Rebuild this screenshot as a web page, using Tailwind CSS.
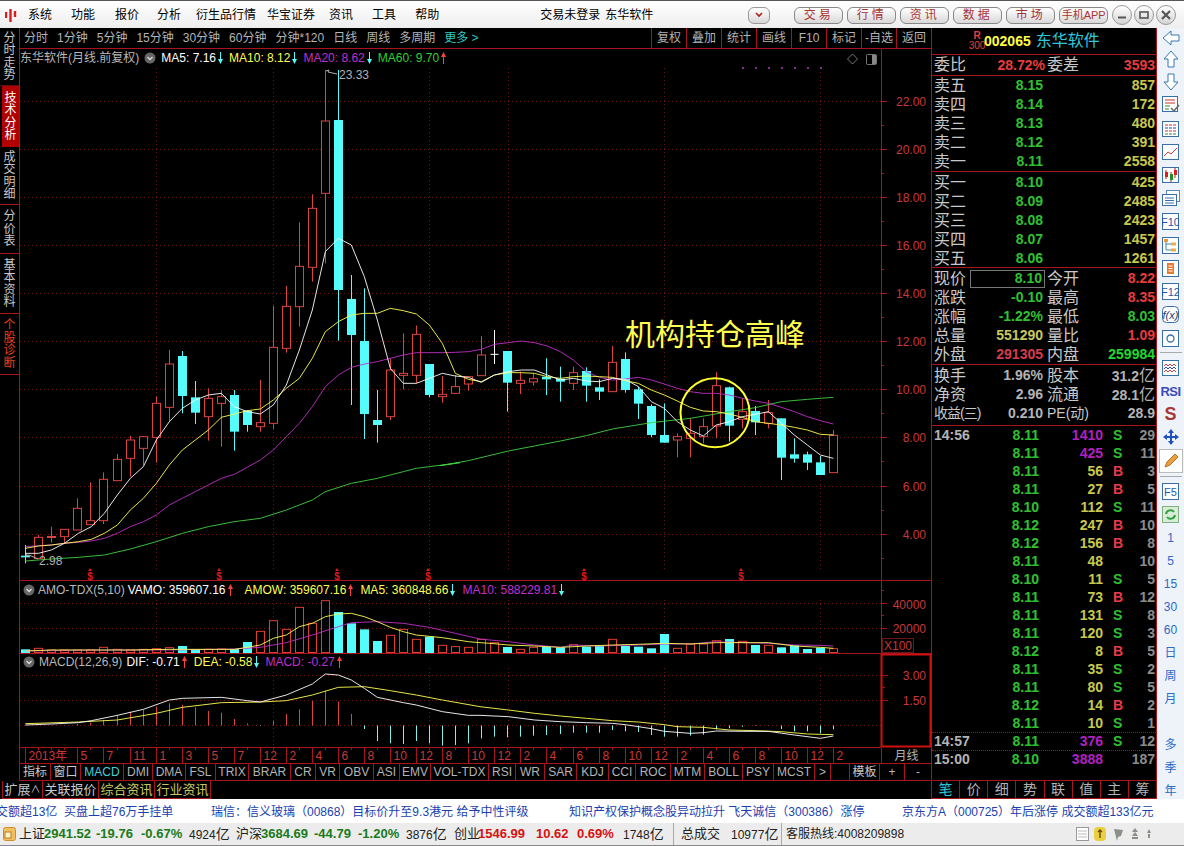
<!DOCTYPE html>
<html lang="zh-CN">

<head>
    <meta charset="UTF-8">
    <title>东华软件</title>
    <script src="https://cdn.jsdelivr.net/npm/@tailwindcss/browser@4"></script>
</head>

<body class="w-[1184px] h-[846px] overflow-hidden bg-black text-[12px] font-['Liberation_Sans','Noto_Sans_CJK_SC',sans-serif]">

    <!-- title bar -->
    <div class="flex items-center h-[28px] pt-[1px] border-t border-[#555] bg-gradient-to-b from-white to-[#eeeeee] text-black whitespace-nowrap">
        <svg class="ml-[5px] shrink-0" width="12" height="15" viewBox="0 0 12 15">
            <path d="M1 4v6M5.500 1v13M10 3v6" stroke="#d81e1e" stroke-width="2.400" />
        </svg>
        <span class="ml-[11px]">系统</span>
        <span class="ml-[19px]">功能</span>
        <span class="ml-[20px]">报价</span>
        <span class="ml-[18px]">分析</span>
        <span class="ml-[15px]">衍生品行情</span>
        <span class="ml-[11px]">华宝证券</span>
        <span class="ml-[14px]">资讯</span>
        <span class="ml-[19px]">工具</span>
        <span class="ml-[19px]">帮助</span>
        <span class="ml-[101px]">交易未登录</span>
        <span class="ml-[5px]">东华软件</span>
        <div class="ml-[95px] flex items-center justify-center w-[22px] h-[17px] rounded-[6px] border border-[#999] bg-gradient-to-b from-white to-[#d8d8d8]">
            <svg width="8" height="6" viewBox="0 0 8 6"><path d="M1 1l3 3 3-3" fill="none" stroke="#b02020" stroke-width="1.600" /></svg>
        </div>
        <div class="ml-[24px] flex gap-[4px]">
            <span class="flex items-center justify-center w-[49px] h-[17px] rounded-[6px] border border-[#888] bg-gradient-to-b from-white to-[#d8d8d8] text-[#a83434] tracking-[3px]">交易</span>
            <span class="flex items-center justify-center w-[49px] h-[17px] rounded-[6px] border border-[#888] bg-gradient-to-b from-white to-[#d8d8d8] text-[#a83434] tracking-[3px]">行情</span>
            <span class="flex items-center justify-center w-[49px] h-[17px] rounded-[6px] border border-[#888] bg-gradient-to-b from-white to-[#d8d8d8] text-[#a83434] tracking-[3px]">资讯</span>
            <span class="flex items-center justify-center w-[49px] h-[17px] rounded-[6px] border border-[#888] bg-gradient-to-b from-white to-[#d8d8d8] text-[#a83434] tracking-[3px]">数据</span>
            <span class="flex items-center justify-center w-[49px] h-[17px] rounded-[6px] border border-[#888] bg-gradient-to-b from-white to-[#d8d8d8] text-[#a83434] tracking-[3px]">市场</span>
            <span class="flex items-center justify-center w-[49px] h-[17px] rounded-[6px] border border-[#888] bg-gradient-to-b from-white to-[#d8d8d8] text-[#a83434] text-[11px]">手机APP</span>
        </div>
        <div class="ml-[4px] flex gap-[2px]">
            <span class="flex items-center justify-center w-[20px] h-[20px] rounded-full border border-[#999] bg-gradient-to-b from-white to-[#d4d4d4]">
                <svg width="10" height="10" viewBox="0 0 10 10"><path d="M1 7.500h8" stroke="#555" stroke-width="2" /></svg>
            </span>
            <span class="flex items-center justify-center w-[20px] h-[20px] rounded-full border border-[#999] bg-gradient-to-b from-white to-[#d4d4d4]">
                <svg width="10" height="10" viewBox="0 0 10 10"><rect x="1" y="2" width="8" height="6" fill="none" stroke="#555" stroke-width="1.600" /></svg>
            </span>
            <span class="flex items-center justify-center w-[20px] h-[20px] rounded-full border border-[#999] bg-gradient-to-b from-white to-[#d4d4d4]">
                <svg width="10" height="10" viewBox="0 0 10 10"><path d="M1 1l8 8M9 1l-8 8" stroke="#555" stroke-width="2.200" /></svg>
            </span>
        </div>
    </div>

    <div class="flex h-[771px]">
        <!-- left side: sidebar + charts + tabs -->
        <div class="flex flex-col w-[931px] shrink-0">
            <div class="flex h-[753px]">
                <div class="flex flex-col w-[20px] shrink-0 border-r border-[#a8141c] text-[#c8c8c8] text-[12px] leading-[12.5px]">
                    <div class="flex items-center justify-center h-[58px] border-b border-[#5a1010]"><span class="w-[12px] break-all">分时走势</span></div>
                    <div class="flex items-center justify-center h-[61px] ml-[2px] bg-[#b00000] text-white"><span class="w-[12px] break-all">技术分析</span></div>
                    <div class="flex items-center justify-center h-[58px] border-b border-[#a8141c]"><span class="w-[12px] break-all">成交明细</span></div>
                    <div class="flex items-center justify-center h-[49px] border-b border-[#a8141c]"><span class="w-[12px] break-all">分价表</span></div>
                    <div class="flex items-center justify-center h-[60px] border-b border-[#a8141c]"><span class="w-[12px] break-all">基本资料</span></div>
                    <div class="flex items-center justify-center h-[61px] border-b border-[#a8141c] text-[#e84020]"><span class="w-[12px] break-all">个股诊断</span></div>
                </div>
                <div class="flex flex-col w-[911px] shrink-0">
                    <!-- period bar -->
                    <div class="flex items-center h-[21px] border-b border-[#a8141c] text-[#b4b4b4] whitespace-nowrap">
                        <div class="flex items-center gap-[9px] ml-[4px] w-[627px]">
                            <span>分时</span><span>1分钟</span><span>5分钟</span><span>15分钟</span><span>30分钟</span><span>60分钟</span><span>分钟*120</span><span>日线</span><span>周线</span><span>多周期</span><span class="text-[#30c8c0]">更多 &gt;</span>
                        </div>
                        <div class="flex h-full">
                            <span class="flex items-center justify-center w-[35px] border-l border-[#a8141c]">复权</span>
                            <span class="flex items-center justify-center w-[35px] border-l border-[#a8141c]">叠加</span>
                            <span class="flex items-center justify-center w-[35px] border-l border-[#a8141c]">统计</span>
                            <span class="flex items-center justify-center w-[35px] border-l border-[#a8141c]">画线</span>
                            <span class="flex items-center justify-center w-[35px] border-l border-[#a8141c]">F10</span>
                            <span class="flex items-center justify-center w-[35px] border-l border-[#a8141c]">标记</span>
                            <span class="flex items-center justify-center w-[35px] border-l border-[#a8141c]">-自选</span>
                            <span class="flex items-center justify-center w-[35px] border-l border-[#a8141c]">返回</span>
                        </div>
                    </div>
                    <!-- price chart -->
                    <div class="relative h-[532px]">
                        <svg id="price" class="block" width="911" height="532" viewBox="20 49 911 532"></svg>
                        <div id="price-legend" class="absolute top-0 left-0 flex items-center h-[18px] gap-[5px] whitespace-nowrap text-[#b8b8b8]"></div>
                    </div>
                    <!-- amount -->
                    <div class="relative h-[73px]">
                        <svg id="amo" class="block" width="911" height="73" viewBox="20 581 911 73"></svg>
                        <div id="amo-legend" class="absolute top-0 left-[3px] flex items-center h-[17px] whitespace-nowrap text-[#b8b8b8]"></div>
                    </div>
                    <!-- macd -->
                    <div class="relative h-[94px]">
                        <svg id="macd" class="block" width="911" height="94" viewBox="20 654 911 94"></svg>
                        <div id="macd-legend" class="absolute top-0 left-[3px] flex items-center h-[16px] whitespace-nowrap text-[#b8b8b8]"></div>
                    </div>
                    <!-- dates -->
                    <div class="flex h-[16px] border-b border-[#a8141c]">
                        <svg id="dates" class="block shrink-0" width="861" height="15" viewBox="20 748 861 15"></svg>
                        <span class="flex flex-1 items-center justify-center border-l border-[#a8141c] text-[#b4b4b4]">月线</span>
                    </div>
                    <!-- indicators -->
                    <div class="flex h-[17px] border-b border-[#a8141c] text-[#b4b4b4] whitespace-nowrap">
                        <span class="flex items-center justify-center w-[31px] border-r border-[#a8141c] text-[#c8c8c8]">指标</span>
                        <span class="flex items-center justify-center w-[30px] border-r border-[#a8141c] text-[#c8c8c8]">窗口</span>
                        <span class="flex items-center justify-center w-[43px] border-r border-[#a8141c] text-[#40d0d8]">MACD</span>
                        <span class="flex items-center justify-center w-[29px] border-r border-[#a8141c]">DMI</span>
                        <span class="flex items-center justify-center w-[33px] border-r border-[#a8141c]">DMA</span>
                        <span class="flex items-center justify-center w-[30px] border-r border-[#a8141c]">FSL</span>
                        <span class="flex items-center justify-center w-[33px] border-r border-[#a8141c]">TRIX</span>
                        <span class="flex items-center justify-center w-[42px] border-r border-[#a8141c]">BRAR</span>
                        <span class="flex items-center justify-center w-[25px] border-r border-[#a8141c]">CR</span>
                        <span class="flex items-center justify-center w-[24px] border-r border-[#a8141c]">VR</span>
                        <span class="flex items-center justify-center w-[34px] border-r border-[#a8141c]">OBV</span>
                        <span class="flex items-center justify-center w-[26px] border-r border-[#a8141c]">ASI</span>
                        <span class="flex items-center justify-center w-[31px] border-r border-[#a8141c]">EMV</span>
                        <span class="flex items-center justify-center w-[58px] border-r border-[#a8141c]">VOL-TDX</span>
                        <span class="flex items-center justify-center w-[27px] border-r border-[#a8141c]">RSI</span>
                        <span class="flex items-center justify-center w-[29px] border-r border-[#a8141c]">WR</span>
                        <span class="flex items-center justify-center w-[32px] border-r border-[#a8141c]">SAR</span>
                        <span class="flex items-center justify-center w-[32px] border-r border-[#a8141c]">KDJ</span>
                        <span class="flex items-center justify-center w-[27px] border-r border-[#a8141c]">CCI</span>
                        <span class="flex items-center justify-center w-[35px] border-r border-[#a8141c]">ROC</span>
                        <span class="flex items-center justify-center w-[34px] border-r border-[#a8141c]">MTM</span>
                        <span class="flex items-center justify-center w-[38px] border-r border-[#a8141c]">BOLL</span>
                        <span class="flex items-center justify-center w-[31px] border-r border-[#a8141c]">PSY</span>
                        <span class="flex items-center justify-center w-[41px] border-r border-[#a8141c]">MCST</span>
                        <span class="flex items-center justify-center w-[16px] border-r border-[#a8141c]">&gt;</span>
                        <span class="w-[19px] border-r border-[#a8141c]"></span>
                        <span class="flex items-center justify-center w-[30px] border-r border-[#a8141c] text-[#c8c8c8]">模板</span>
                        <span class="flex items-center justify-center w-[25px] border-r border-[#a8141c]">+</span>
                        <span class="flex flex-1 items-center justify-center">-</span>
                    </div>
                </div>
            </div>
            <!-- extension tabs -->
            <div class="flex h-[18px] ml-[2px] whitespace-nowrap">
                <span class="flex items-center justify-center w-[41px] border border-t-0 border-[#a8141c] text-[#c8c8c8] text-[13px]">扩展<small class="text-[10px]">∧</small></span>
                <span class="flex items-center justify-center w-[56px] border-r border-b border-[#a8141c] text-[#c8c8c8] text-[13px]">关联报价</span>
                <span class="flex items-center justify-center w-[56px] border-r border-b border-[#a8141c] text-[#c8c860] text-[13px]">综合资讯</span>
                <span class="flex items-center justify-center w-[56px] border-r border-b border-[#a8141c] text-[#c8c860] text-[13px]">行业资讯</span>
            </div>
        </div>

        <!-- quote panel -->
        <div class="flex flex-col w-[226px] shrink-0 border-x border-[#a8141c] text-[#c8c8c8] whitespace-nowrap">
            <div class="flex items-center h-[27px] border-b border-[#a8141c]">
                <span class="flex flex-col items-center ml-[39px] w-[12px] text-[10px] leading-[10px] text-[#e04040]"><b>R</b><span>300</span></span>
                <b class="ml-[1px] text-[14px] text-[#ffff40]">002065</b>
                <span class="ml-[5px] text-[16px] text-[#30c8d8]">东华软件</span>
            </div>
            <div class="flex items-center h-[21px] border-b border-[#a8141c] pl-[2px]">
                <span class="w-[36px] text-[16px]">委比</span><b class="w-[75px] text-right text-[14px] text-[#e83c3c]">28.72%</b>
                <span class="ml-[2px] w-[32px] text-[16px]">委差</span><b class="flex-1 pr-[1px] text-right text-[14px] text-[#e83c3c]">3593</b>
            </div>
            <div id="asks" class="h-[96px] border-b border-[#a8141c] pl-[2px]"></div>
            <div id="bids" class="h-[96px] pt-[1px] border-b border-[#a8141c] pl-[2px]"></div>
            <div class="h-[97px] pt-[1px] border-b border-[#a8141c] pl-[2px]">
                <div class="flex items-center h-[19px]"><span class="w-[36px] text-[16px]">现价</span><b class="flex justify-end items-center w-[75px] h-[18px] pr-[2px] border border-[#777] text-[14px] text-[#30c030]">8.10</b><span class="ml-[2px] w-[32px] text-[16px]">今开</span><b class="flex-1 pr-[1px] text-right text-[14px] text-[#e83c3c]">8.22</b></div>
                <div class="flex items-center h-[19px]"><span class="w-[36px] text-[16px]">涨跌</span><b class="w-[73px] text-right text-[14px] text-[#30c030]">-0.10</b><span class="ml-[4px] w-[32px] text-[16px]">最高</span><b class="flex-1 pr-[1px] text-right text-[14px] text-[#e83c3c]">8.35</b></div>
                <div class="flex items-center h-[19px]"><span class="w-[36px] text-[16px]">涨幅</span><b class="w-[73px] text-right text-[14px] text-[#30c030]">-1.22%</b><span class="ml-[4px] w-[32px] text-[16px]">最低</span><b class="flex-1 pr-[1px] text-right text-[14px] text-[#30c030]">8.03</b></div>
                <div class="flex items-center h-[19px]"><span class="w-[36px] text-[16px]">总量</span><b class="w-[73px] text-right text-[14px] text-[#c8c860]">551290</b><span class="ml-[4px] w-[32px] text-[16px]">量比</span><b class="flex-1 pr-[1px] text-right text-[14px] text-[#e83c3c]">1.09</b></div>
                <div class="flex items-center h-[19px]"><span class="w-[36px] text-[16px]">外盘</span><b class="w-[73px] text-right text-[14px] text-[#d83c4c]">291305</b><span class="ml-[4px] w-[32px] text-[16px]">内盘</span><b class="flex-1 pr-[1px] text-right text-[14px] text-[#20d830]">259984</b></div>
            </div>
            <div class="h-[61px] pt-[1px] border-b border-[#a8141c] pl-[2px]">
                <div class="flex items-center h-[19px]"><span class="w-[36px] text-[16px]">换手</span><b class="w-[73px] text-right text-[14px] text-[#b4b4b4]">1.96%</b><span class="ml-[4px] w-[32px] text-[16px]">股本</span><b class="flex-1 pr-[1px] text-right text-[14px] text-[#b4b4b4]">31.2<span class="font-normal text-[16px]">亿</span></b></div>
                <div class="flex items-center h-[19px]"><span class="w-[36px] text-[16px]">净资</span><b class="w-[73px] text-right text-[14px] text-[#b4b4b4]">2.96</b><span class="ml-[4px] w-[32px] text-[16px]">流通</span><b class="flex-1 pr-[1px] text-right text-[14px] text-[#b4b4b4]">28.1<span class="font-normal text-[16px]">亿</span></b></div>
                <div class="flex items-center h-[19px]"><span class="w-[36px] text-[14px] tracking-[-1px]">收益(三)</span><b class="w-[73px] text-right text-[14px] text-[#b4b4b4]">0.210</b><span class="ml-[4px] w-[42px] text-[14px]">PE(动)</span><b class="flex-1 pr-[1px] text-right text-[14px] text-[#b4b4b4]">28.9</b></div>
            </div>
            <div id="trades" class="flex-1"></div>
            <div class="flex h-[19px] border-y border-[#a8141c] text-[14px] text-[#b4b4b4]">
                <span class="flex flex-1 items-center justify-center border-r border-[#a8141c] text-[#30c8d8]">笔</span>
                <span class="flex flex-1 items-center justify-center border-r border-[#a8141c]">价</span>
                <span class="flex flex-1 items-center justify-center border-r border-[#a8141c]">细</span>
                <span class="flex flex-1 items-center justify-center border-r border-[#a8141c]">势</span>
                <span class="flex flex-1 items-center justify-center border-r border-[#a8141c]">联</span>
                <span class="flex flex-1 items-center justify-center border-r border-[#a8141c]">值</span>
                <span class="flex flex-1 items-center justify-center border-r border-[#a8141c]">主</span>
                <span class="flex flex-1 items-center justify-center">筹</span>
            </div>
        </div>

        <!-- tool strip -->
        <div class="flex flex-col items-center w-[27px] shrink-0 overflow-hidden bg-[#eef3fa] text-[#2a6ac8]">
            <span class="flex items-center justify-center h-[19px] shrink-0"><svg width="20" height="18" viewBox="0 0 20 18"><path d="M2 9l8-7v4h8v6h-8v4z" fill="#fff" stroke="#3a78b0" /></svg></span>
            <span class="flex items-center justify-center h-[23.3px] shrink-0"><svg width="18" height="20" viewBox="0 0 18 20"><path d="M9 2l7 8h-4v8H6v-8H2z" fill="#fff" stroke="#3a78b0" /></svg></span>
            <span class="flex items-center justify-center h-[23.3px] shrink-0"><svg width="18" height="20" viewBox="0 0 18 20"><path d="M9 18l7-8h-4V2H6v8H2z" fill="#fff" stroke="#3a78b0" /></svg></span>
            <span class="flex items-center justify-center h-[23.3px] shrink-0"><svg width="18" height="18" viewBox="0 0 18 18"><rect x=".5" y=".5" width="15" height="15" fill="#fff" stroke="#3a6ea8" /><path d="M3 4h10M3 7h10" stroke="#c83030" /><path d="M3 10h5M3 13h4" stroke="#308830" /><path d="M9 12l3 3 5-6" fill="none" stroke="#666" stroke-width="1.500" /></svg></span>
            <span class="flex items-center justify-center h-[23.3px] shrink-0"><svg width="17" height="16" viewBox="0 0 17 16"><rect x=".5" y=".5" width="16" height="15" fill="#fff" stroke="#3a6ea8" /><path d="M3 4h11M3 10h11" stroke="#c83030" stroke-dasharray="3 1" /><path d="M3 7h11" stroke="#2040c0" stroke-dasharray="3 1" /><path d="M3 13h11" stroke="#308830" stroke-dasharray="3 1" /></svg></span>
            <span class="flex items-center justify-center h-[23.3px] shrink-0"><svg width="17" height="16" viewBox="0 0 17 16"><rect x=".5" y=".5" width="16" height="15" fill="#fff" stroke="#3a6ea8" /><path d="M2 12l4-4 3 2 6-6" fill="none" stroke="#d04040" /></svg></span>
            <span class="flex items-center justify-center h-[23.3px] shrink-0"><svg width="17" height="16" viewBox="0 0 17 16"><rect x=".5" y=".5" width="16" height="15" fill="#fff" stroke="#3a6ea8" /><path d="M4 3v9M9 5v10M13 1v10" stroke="#b02020" /><rect x="3" y="5" width="3" height="5" fill="#d82020" /><rect x="8" y="7" width="3" height="6" fill="#209020" /><rect x="12" y="3" width="3" height="5" fill="#d82020" /></svg></span>
            <span class="flex items-center justify-center h-[23.3px] shrink-0"><svg width="18" height="16" viewBox="0 0 18 16"><rect x="4.500" y=".5" width="13" height="11" fill="#fff" stroke="#5a88b8" /><rect x=".5" y="4.500" width="14" height="11" fill="#fff" stroke="#3a6ea8" /><path d="M3 8h9M3 10.500h9M3 13h9" stroke="#3a6ea8" /></svg></span>
            <span class="flex items-center justify-center h-[23.3px] shrink-0"><svg width="17" height="17" viewBox="0 0 17 17"><rect x=".5" y=".5" width="16" height="16" fill="#fff" stroke="#3a6ea8" /><text x="8.500" y="13" text-anchor="middle" font-size="11" fill="#1f5aa8">F10</text></svg></span>
            <span class="flex items-center justify-center h-[23.3px] shrink-0"><svg width="17" height="17" viewBox="0 0 17 17"><rect x=".5" y=".5" width="16" height="16" fill="#fff" stroke="#3a6ea8" /><path d="M4 3v10h5M4 7h5" fill="none" stroke="#3a88a8" /><rect x="2" y="2" width="4" height="3" fill="#e89830" /><rect x="9" y="5.500" width="5" height="3" fill="#e8b040" /><rect x="9" y="11.500" width="5" height="3" fill="#e8b040" /></svg></span>
            <span class="flex items-center justify-center h-[23.3px] shrink-0"><svg width="17" height="17" viewBox="0 0 17 17"><rect x=".5" y=".5" width="16" height="16" fill="#fff" stroke="#3a6ea8" /><rect x="5" y="3" width="7" height="11" fill="#e87830" /><path d="M6.500 6h4M6.500 8.500h4M6.500 11h4" stroke="#fff" /></svg></span>
            <span class="flex items-center justify-center h-[23.3px] shrink-0"><svg width="17" height="17" viewBox="0 0 17 17"><rect x=".5" y=".5" width="16" height="16" fill="#fff" stroke="#3a6ea8" /><text x="8.500" y="13" text-anchor="middle" font-size="11" fill="#1f5aa8">F12</text></svg></span>
            <span class="flex items-center justify-center h-[23.3px] shrink-0"><svg width="17" height="17" viewBox="0 0 17 17"><rect x=".5" y=".5" width="16" height="16" rx="4" fill="#fff" stroke="#3a6ea8" /><text x="8.500" y="13" text-anchor="middle" font-size="11" font-style="italic" fill="#1f3a68">f(x)</text></svg></span>
            <span class="flex items-center justify-center h-[23.3px] shrink-0"><svg width="17" height="17" viewBox="0 0 17 17"><rect x=".5" y=".5" width="16" height="16" fill="#fff" stroke="#3a6ea8" /><circle cx="8.500" cy="8.500" r="3.500" fill="none" stroke="#3a6ea8" stroke-width="1.300" /></svg></span>
            <span class="flex items-center justify-center h-[6px] w-full shrink-0"><span class="w-[22px] border-t border-[#aaa]"></span></span>
            <span class="flex items-center justify-center h-[24px] shrink-0"><svg width="17" height="16" viewBox="0 0 17 16"><rect x=".5" y=".5" width="16" height="15" fill="#fff" stroke="#3a6ea8" /><path d="M2 6l2-2 2 2 2-2 2 2 2-2 2 2" fill="none" stroke="#d04040" /><path d="M2 9l2-2 2 2 2-2 2 2 2-2 2 2" fill="none" stroke="#3040c0" /><path d="M2 12l2-2 2 2 2-2 2 2 2-2 2 2" fill="none" stroke="#d04040" /></svg></span>
            <b class="flex items-center justify-center h-[23px] shrink-0 text-[13px] text-[#3a4ab8] tracking-[-0.5px]">RSI</b>
            <b class="flex items-center justify-center h-[23px] shrink-0 text-[18px] text-[#a83838]">S</b>
            <span class="flex items-center justify-center h-[23px] shrink-0"><svg width="18" height="18" viewBox="0 0 18 18"><path d="M9 1l3 4h-2v3h3V6l4 3-4 3v-2h-3v3h2l-3 4-3-4h2v-3H5v2L1 9l4-3v2h3V5H6z" fill="#1f50c0" /></svg></span>
            <span class="flex items-center justify-center w-[24px] h-[24px] shrink-0 border border-[#bbb] bg-white"><svg width="18" height="18" viewBox="0 0 18 18"><path d="M3 15l2-5 8-8 3 3-8 8z" fill="#e8a040" stroke="#b87020" /></svg></span>
            <span class="flex items-center justify-center h-[7px] w-full shrink-0"><span class="w-[22px] border-t border-[#aaa]"></span></span>
            <span class="flex items-center justify-center h-[23px] shrink-0"><svg width="17" height="17" viewBox="0 0 17 17"><rect x=".5" y=".5" width="16" height="16" fill="#fff" stroke="#3a6ea8" /><text x="8.500" y="13" text-anchor="middle" font-size="11" fill="#1f5aa8">F5</text></svg></span>
            <span class="flex items-center justify-center h-[23px] mb-[1px] shrink-0"><svg width="17" height="17" viewBox="0 0 17 17"><rect x=".5" y=".5" width="16" height="16" fill="#d8ecd8" stroke="#80b080" /><path d="M4 8a4.500 4.500 0 0 1 8-2M13 9a4.500 4.500 0 0 1-8 2" fill="none" stroke="#30a040" stroke-width="2" /></svg></span>
            <span class="flex items-center justify-center h-[23px] shrink-0">1</span>
            <span class="flex items-center justify-center h-[23px] shrink-0">5</span>
            <span class="flex items-center justify-center h-[23px] shrink-0">15</span>
            <span class="flex items-center justify-center h-[23px] shrink-0">30</span>
            <span class="flex items-center justify-center h-[23px] shrink-0">60</span>
            <span class="flex items-center justify-center h-[23px] shrink-0">日</span>
            <span class="flex items-center justify-center h-[23px] shrink-0">周</span>
            <span class="flex items-center justify-center h-[23px] shrink-0">月</span>
            <span class="h-[23px] shrink-0"></span>
            <span class="flex items-center justify-center h-[23px] shrink-0">多</span>
            <span class="flex items-center justify-center h-[23px] shrink-0">季</span>
            <span class="flex items-center justify-center h-[23px] shrink-0">年</span>
        </div>
    </div>

    <!-- news ticker -->
    <div class="flex items-center h-[24px] pt-[1px] bg-white text-[#1a3fb0] whitespace-nowrap overflow-hidden">
        <span class="-ml-[4px] w-[215px] shrink-0">交额超13亿&nbsp;&nbsp;买盘上超76万手挂单</span>
        <span class="w-[358px] shrink-0">瑞信：信义玻璃（00868）目标价升至9.3港元 给予中性评级</span>
        <span class="w-[333px] shrink-0">知识产权保护概念股异动拉升 飞天诚信（300386）涨停</span>
        <span class="shrink-0">京东方A（000725）年后涨停 成交额超133亿元</span>
    </div>

    <!-- status bar -->
    <div class="flex items-center h-[23px] bg-[#ececec] border-b border-[#888] whitespace-nowrap text-[#222]">
        <span class="ml-[3px] w-[16px] shrink-0"><svg width="13" height="14" viewBox="0 0 13 14"><rect x=".5" y=".5" width="12" height="13" rx="2" fill="#f0c060" stroke="#c89030" /><rect x="2" y="5" width="6" height="6" fill="#fff4d0" stroke="#c07820" /></svg></span>
        <span class="w-[25px] text-[13px]">上证</span>
        <b class="w-[52px] text-[13px] text-[#1a7a1a]">2941.52</b>
        <b class="w-[45px] text-[13px] text-[#1a7a1a]">-19.76</b>
        <b class="w-[48px] text-[13px] text-[#1a7a1a]">-0.67%</b>
        <span class="w-[47px]">4924<span class="text-[14px]">亿</span></span>
        <span class="w-[25px] text-[13px]">沪深</span>
        <b class="w-[53px] text-[13px] text-[#1a7a1a]">3684.69</b>
        <b class="w-[44px] text-[13px] text-[#1a7a1a]">-44.79</b>
        <b class="w-[48px] text-[13px] text-[#1a7a1a]">-1.20%</b>
        <span class="w-[48px]">3876<span class="text-[14px]">亿</span></span>
        <span class="w-[24px] text-[13px]">创业</span>
        <b class="w-[58px] text-[13px] text-[#d81010]">1546.99</b>
        <b class="w-[41px] text-[13px] text-[#d81010]">10.62</b>
        <b class="w-[46px] text-[13px] text-[#d81010]">0.69%</b>
        <span class="w-[50px]">1748<span class="text-[14px]">亿</span></span>
        <span class="h-full w-[8px] border-l border-[#aaa]"></span>
        <span class="w-[50px] text-[13px]">总成交</span>
        <span class="w-[50px]">10977<span class="text-[14px]">亿</span></span>
        <span class="h-full w-[5px] border-l border-[#aaa]"></span>
        <span class="w-[290px]">客服热线:4008209898</span>
        <span class="w-[18px]"><svg width="13" height="14" viewBox="0 0 13 14"><rect x=".5" y=".5" width="12" height="13" fill="#fff" stroke="#999" /><path d="M2 4h9M2 7h9M2 10h9" stroke="#bbb" /></svg></span>
        <span class="w-[19px]"><svg width="12" height="14" viewBox="0 0 12 14"><rect width="12" height="14" rx="4" fill="#e8d040" /><path d="M6 3v8M4 5l2-2 2 2" fill="none" stroke="#705010" stroke-width="1.500" /></svg></span>
        <span class="w-[18px]"><svg width="11" height="13" viewBox="0 0 11 13"><path d="M1 1l9 1-2 6-3 1-1 4-1-4z" fill="#8a9088" /></svg></span>
        <span class="w-[16px]"><svg width="8" height="12" viewBox="0 0 8 12"><path d="M4 0l3 4H1zM4 4l3 4H1zM1 9h6v2H1z" fill="#8a9088" /></svg></span>
        <span><svg width="4" height="10" viewBox="0 0 4 10"><path d="M2 0l2 4H0zM1 5h2v4H1z" fill="#8a9088" /></svg></span>
    </div>

    <script>
        const RED = '#dc4440', CYAN = '#54fcfc', LINE = '#a8141c', DOT = '#6e1414', AXIS = '#c83838';
        const cx = i => Math.round(25.3 + 13.03 * i) + 0.5;

        // [kind, high, top, bottom, low], zoomed pixel rows, first part /3+60, second part /3+320
        const first = [['c', 1455, 1487, 1492, 1510], ['r', 1425, 1432, 1495, 1495], ['f', 1400, 1428, 1434, 1448], ['r', 1408, 1408, 1430, 1450], ['r', 1315, 1345, 1410, 1410], ['r', 1267, 1382, 1394, 1394], ['r', 1237, 1258, 1382, 1392], ['r', 1182, 1198, 1262, 1262], ['r', 1128, 1140, 1195, 1250], ['r', 1128, 1130, 1165, 1215], ['r', 1010, 1030, 1132, 1208], ['r', 870, 912, 1042, 1085], ['c', 873, 888, 1008, 1060], ['c', 963, 1012, 1058, 1092], ['r', 985, 1015, 1070, 1142], ['r', 990, 1010, 1030, 1160], ['c', 990, 1005, 1115, 1172], ['c', 1050, 1052, 1095, 1115], ['r', 960, 1088, 1100, 1115], ['r', 737, 862, 1090, 1108], ['r', 678, 739, 865, 878], ['r', 487, 619, 740, 800], ['r', 403, 445, 622, 665], ['r', 30, 183, 400, 610], ['c', 30, 180, 690, 842], ['c', 645, 717, 825, 1035], ['c', 685, 843, 1062, 1137], ['c', 990, 1080, 1095, 1148], ['r', 895, 930, 1070, 1080], ['r', 820, 940, 946, 988], ['r', 797, 823, 946, 970], ['c', 912, 912, 1005, 1012], ['r', 948, 1003, 1010, 1028], ['r', 945, 980, 1000, 1000]];
        const second = [['r', 168, 170, 192, 212], ['r', 48, 105, 167, 167], ['w', 30, 103, 104, 132], ['c', 93, 93, 188, 275], ['r', 155, 181, 190, 222], ['r', 160, 176, 186, 197], ['c', 115, 170, 178, 225], ['c', 140, 176, 185, 245], ['r', 140, 158, 190, 210], ['c', 142, 153, 197, 245], ['c', 178, 202, 215, 240], ['r', 78, 127, 215, 215], ['c', 97, 117, 210, 218], ['c', 200, 208, 251, 297], ['c', 253, 258, 345, 352], ['c', 250, 345, 368, 368], ['r', 340, 350, 360, 412], ['r', 295, 340, 355, 412], ['r', 295, 320, 350, 370], ['r', 157, 197, 318, 355], ['c', 200, 202, 317, 365], ['r', 235, 275, 298, 325], ['c', 258, 273, 307, 345], ['r', 240, 278, 310, 325], ['c', 295, 295, 413, 480], ['c', 355, 403, 416, 428], ['c', 395, 403, 428, 450], ['c', 408, 427, 465, 465], ['r', 330, 346, 458, 458]];
        const candles = first.map(c => [c[0], ...c.slice(1).map(v => 60 + v / 3)]).concat(second.map(c => [c[0], ...c.slice(1).map(v => 320 + v / 3)]));

        const p6 = a => a.map(([x, y]) => (20 + x / 3) + ',' + (60 + y / 3));
        const p7 = a => a.map(([x, y]) => (440 + x / 3) + ',' + (320 + y / 3));
        const p8 = a => a.map(([x, y]) => (20 + x / 3) + ',' + (570 + y / 3));
        const p9 = a => a.map(([x, y]) => (470 + x / 3) + ',' + (570 + y / 3));
        const poly = (pts, color) => `<polyline points="${pts.join(' ')}" fill="none" stroke="${color}" stroke-width="0.9"/>`;

        const ma5 = p6([[16, 1480], [55, 1480], [94, 1470], [133, 1450], [175, 1420], [214, 1400], [253, 1360], [292, 1305], [331, 1255], [370, 1220], [409, 1140], [448, 1085], [487, 1045], [526, 1020], [565, 1005], [604, 1000], [643, 1040], [682, 1055], [721, 1062], [760, 1035], [799, 975], [838, 870], [877, 750], [916, 575], [955, 535], [994, 555], [1033, 650], [1072, 780], [1111, 925], [1150, 970], [1189, 970], [1228, 955], [1267, 940], [1306, 948]]).concat(p7([[85, 172], [124, 187], [163, 165], [205, 155], [244, 150], [283, 150], [322, 165], [361, 180], [400, 175], [439, 183], [478, 185], [517, 175], [556, 178], [595, 200], [634, 245], [673, 265], [712, 305], [751, 330], [790, 348], [829, 315], [868, 305], [907, 290], [946, 283], [985, 275], [1024, 310], [1063, 345], [1102, 375], [1141, 405], [1180, 415]]));
        const ma10 = p6([[16, 1465], [55, 1458], [94, 1455], [133, 1450], [175, 1445], [214, 1438], [253, 1420], [292, 1395], [331, 1350], [370, 1315], [409, 1270], [448, 1215], [487, 1170], [526, 1140], [565, 1110], [604, 1072], [643, 1062], [682, 1052], [721, 1047], [760, 1020], [799, 985], [838, 955], [877, 895], [916, 815], [955, 785], [994, 765], [1033, 760], [1072, 760], [1111, 745], [1150, 752], [1189, 762], [1228, 795], [1267, 850], [1306, 940]]).concat(p7([[85, 178], [124, 185], [163, 165], [205, 158], [244, 158], [283, 160], [322, 170], [361, 175], [400, 170], [439, 168], [478, 170], [517, 172], [556, 182], [595, 190], [634, 210], [673, 225], [712, 243], [751, 262], [790, 273], [829, 275], [868, 282], [907, 292], [946, 305], [985, 310], [1024, 315], [1063, 322], [1102, 330], [1141, 343], [1180, 345]]));
        const ma20 = p6([[16, 1460], [55, 1457], [94, 1455], [133, 1450], [175, 1447], [214, 1443], [253, 1435], [292, 1420], [331, 1400], [370, 1385], [409, 1365], [448, 1335], [487, 1315], [526, 1295], [565, 1275], [604, 1255], [643, 1243], [682, 1222], [721, 1200], [760, 1170], [799, 1130], [838, 1090], [877, 1040], [916, 980], [955, 945], [994, 922], [1033, 912], [1072, 905], [1111, 895], [1150, 885], [1189, 878], [1228, 878], [1267, 878], [1306, 877]]).concat(p7([[85, 95], [124, 88], [163, 73], [205, 68], [244, 63], [283, 68], [322, 78], [361, 95], [400, 120], [439, 155], [478, 172], [517, 180], [556, 177], [595, 172], [634, 180], [673, 192], [712, 205], [751, 215], [790, 220], [829, 220], [868, 225], [907, 235], [946, 243], [985, 250], [1024, 262], [1063, 275], [1102, 290], [1141, 302], [1180, 312]]));
        const ma60 = p6([[16, 1503], [94, 1497], [175, 1492], [253, 1485], [331, 1467], [409, 1445], [487, 1420], [565, 1400], [643, 1385], [721, 1375], [799, 1350], [877, 1320], [916, 1295], [994, 1270], [1072, 1255], [1150, 1235], [1189, 1225], [1267, 1215], [1320, 1208]]).concat(p7([[0, 437], [85, 422], [205, 393], [283, 378], [361, 363], [439, 347], [517, 327], [634, 308], [751, 295], [868, 275], [946, 263], [1024, 245], [1102, 238], [1180, 232]]));

        const hdot = (y, x2 = 881) => `<path d="M20 ${y}.5H${x2}" stroke="${DOT}" stroke-dasharray="1 3"/>`;
        const vdot = (x, y1, y2) => `<path d="M${x}.5 ${y1}V${y2}" stroke="${DOT}" stroke-dasharray="1 3"/>`;
        const label = (x, y, t, anchor = 'end', color = AXIS) => `<text x="${x}" y="${y}" fill="${color}" font-size="12" text-anchor="${anchor}">${t}</text>`;
        const grid = [156, 273, 429, 508, 664, 820];

        // price chart
        let s = '';
        const levels = [[101, '22.00'], [149, '20.00'], [197, '18.00'], [245, '16.00'], [293, '14.00'], [341, '12.00'], [389, '10.00'], [437, '8.00'], [486, '6.00'], [534, '4.00']];
        levels.forEach(([y, t]) => {
            s += hdot(y) + `<path d="M881 ${y}.5h6M881 ${y + 24}.5h3" stroke="${LINE}"/>` + label(926, y + 5, t);
        });
        grid.forEach(x => s += vdot(x, 68, 570));
        s += `<path d="M881.500 49V580M20 580.500H931" stroke="${LINE}"/>`;
        candles.forEach((c, i) => {
            const x = cx(i), color = c[0] == 'c' ? CYAN : c[0] == 'w' ? '#fff' : RED;
            s += `<path d="M${x} ${c[1]}V${c[4]}" stroke="${color}"/>`;
            const h = Math.max(c[3] - c[2], 1);
            if (c[0] == 'c') s += `<rect x="${x - 4.5}" y="${c[2]}" width="9" height="${h}" fill="${CYAN}"/>`;
            else if (c[0] == 'f') s += `<rect x="${x - 4.5}" y="${c[2]}" width="9" height="${h}" fill="${RED}"/>`;
            else if (c[0] == 'w') s += `<path d="M${x - 4} ${c[2]}h8" stroke="#fff"/>`;
            else s += `<rect x="${x - 4}" y="${c[2]}" width="8" height="${h}" fill="#000" stroke="${color}"/>`;
        });
        s += poly(ma60, '#40d040') + poly(ma20, '#c030c8') + poly(ma10, '#ffff50') + poly(ma5, '#fff');
        // extremes and marks
        s += `<path d="M326 71l3-1-1 2 9 2" fill="none" stroke="#b0b0b0"/>` + label(339, 79, '23.33', 'start', '#b0b0b0');
        s += `<path d="M27 554l-1 2 3-1 9 4" fill="none" stroke="#b0b0b0"/>` + label(39, 565, '2.98', 'start', '#b0b0b0');
        [90, 219, 337, 428, 584, 741].forEach(x => {
            s += `<path d="M${x - 2} 571h4l-2-3z" fill="#e01818"/><text x="${x}" y="580" fill="#e01818" font-size="10" font-weight="bold" text-anchor="middle">$</text>`;
        });
        [742, 755, 768, 781, 794, 807, 820].forEach(x => s += `<rect x="${x}" y="67" width="2" height="2" fill="#8a2a8a"/>`);
        s += `<path d="M852.500 54l5 5-5 5-5-5z" fill="none" stroke="#777"/><rect x="866.500" y="54.500" width="10" height="10" rx="1" fill="none" stroke="#777"/><rect x="872" y="55" width="4" height="9" fill="#888"/>`;
        s += `<circle cx="715" cy="412.700" r="34.500" fill="none" stroke="#ffff30" stroke-width="2"/>`;
        s += `<text x="625" y="345" fill="#ffff50" font-size="30">机构持仓高峰</text>`;
        document.getElementById('price').innerHTML = s;

        // amount panel
        const amoFirst = [238, 235, 240, 240, 240, 240, 232, 238, 240, 238, 236, 233, 228, 237, 238, 237, 237, 216, 184, 152, 178, 112, 160, 92, 126, 160, 178, 213, 196, 178, 208, 200, 226, 230, 232];
        const amoSecond = [208, 218, 231, 238, 232, 230, 232, 224, 230, 228, 208, 228, 230, 235, 192, 235, 222, 222, 212, 207, 214, 225, 226, 232, 226, 237, 233, 236];
        const amo = amoFirst.concat(amoSecond);
        s = '';
        [603, 628].forEach(y => s += hdot(y));
        grid.forEach(x => s += vdot(x, 600, 652));
        s += `<path d="M881.500 581V653M20 653.500H931M881 603.500h6M881 628.500h6M881 615.500h3M881 590.500h3" stroke="${LINE}"/>`;
        s += label(926, 609, '40000') + label(926, 633, '20000');
        s += `<rect x="882.500" y="638.500" width="31" height="14" fill="none" stroke="#6e1414"/>` + label(898, 650, 'X100', 'middle');
        amo.forEach((t, i) => {
            const y = 570 + t / 3, x = cx(i), kind = candles[i][0];
            if (kind == 'c') s += `<rect x="${x - 4.5}" y="${y}" width="9" height="${653 - y}" fill="${CYAN}"/>`;
            else s += `<rect x="${x - 4}" y="${y}" width="8" height="${652.5 - y}" fill="#000" stroke="#e03c30"/>`;
        });
        s += poly(p8([[16, 243], [214, 240], [448, 240], [643, 237], [721, 232], [799, 218], [877, 195], [955, 170], [994, 158], [1072, 155], [1150, 160], [1228, 172], [1306, 190], [1380, 207]]).concat(p9([[60, 210], [115, 215], [194, 225], [271, 232], [310, 225], [388, 228], [505, 225], [583, 222], [661, 222], [739, 215], [817, 218], [895, 220], [973, 225], [1051, 226], [1090, 228]])), '#c030c8');
        s += poly(p8([[16, 243], [94, 240], [214, 240], [331, 240], [448, 238], [526, 238], [643, 238], [682, 232], [721, 225], [760, 205], [799, 195], [838, 170], [877, 160], [916, 140], [955, 132], [994, 130], [1033, 140], [1072, 155], [1111, 172], [1150, 185], [1189, 195], [1267, 203], [1345, 215], [1380, 218]]).concat(p9([[60, 220], [115, 225], [194, 228], [271, 232], [350, 228], [427, 225], [505, 223], [583, 220], [661, 222], [739, 218], [817, 218], [895, 218], [973, 228], [1051, 232], [1090, 235]])), '#ffff50');
        document.getElementById('amo').innerHTML = s;

        // macd panel
        const macdBars = [466, 466, 466, 466, 462, 458, 450, 435, 425, 420, 410, 400, 405, 412, 423, 428, 447, 460, 465, 453, 432, 418, 393, 362, 395, 432, 477, 513, 520, 522, 513, 520, 527, 525, 520, 505, 500, 502, 500, 497, 495, 492, 488, 488, 488, 480, 484, 486, 495, 500, 500, 497, 494, 478, 475, 470, 468, 467, 477, 484, 484, 490, 478];
        s = '';
        [675, 700].forEach(y => s += hdot(y));
        s += hdot(725);
        grid.forEach(x => s += vdot(x, 668, 745));
        s += `<path d="M20 747.500H881" stroke="${LINE}"/><rect x="881.500" y="654.500" width="49" height="92" fill="none" stroke="#d01010" stroke-width="2"/><path d="M882 675.500h6M882 700.500h6M882 687.500h3" stroke="${LINE}"/>`;
        s += label(926, 680, '3.00') + label(926, 705, '1.50');
        macdBars.forEach((t, i) => {
            const y = 570 + t / 3, x = cx(i);
            s += `<path d="M${x} 725.500V${y}" stroke="${y < 725 ? RED : '#80f0e8'}"/>`;
        });
        s += poly(p8([[16, 461], [175, 456], [292, 450], [409, 430], [487, 412], [604, 398], [721, 396], [799, 392], [877, 375], [955, 352], [1033, 350], [1111, 362], [1189, 375], [1267, 390], [1380, 410]]).concat(p9([[115, 420], [194, 430], [271, 438], [350, 445], [427, 452], [505, 456], [583, 464], [622, 470], [700, 472], [778, 480], [856, 482], [934, 485], [1012, 492], [1090, 494]])), '#ffff50');
        s += poly(p8([[16, 465], [94, 462], [175, 458], [214, 452], [292, 436], [370, 418], [448, 390], [487, 385], [604, 382], [682, 392], [721, 396], [799, 375], [877, 342], [916, 312], [955, 315], [994, 330], [1033, 355], [1072, 382], [1150, 398], [1189, 405], [1267, 425], [1345, 436], [1380, 436]]).concat(p9([[115, 440], [194, 450], [271, 455], [350, 458], [427, 460], [466, 464], [544, 476], [583, 484], [661, 490], [700, 488], [739, 483], [817, 484], [895, 484], [973, 495], [1051, 505], [1090, 498]])), '#fff');
        document.getElementById('macd').innerHTML = s;

        // date axis
        const months = ['2013年', '5', '7', '11', '1', '3', '5', '7', '12', '2', '4', '6', '8', '10', '12', '8', '10', '12', '2', '4', '6', '8', '10', '12', '2', '4', '6', '8', '10', '12', '2'];
        const monthIdx = [0, 4, 6, 8, 10, 12, 14, 16, 18, 20, 22, 24, 26, 28, 30, 32, 34, 36, 38, 40, 42, 44, 46, 48, 50, 52, 54, 56, 58, 60, 62];
        s = '';
        for (let i = 0; i < 63; i++) s += `<path d="M${cx(i)} 748v2" stroke="${LINE}"/>`;
        months.forEach((m, n) => {
            const x = cx(monthIdx[n]);
            s += `<path d="M${x} 748v15" stroke="${LINE}"/>` + label(x + 3, 760, m, 'start');
        });
        document.getElementById('dates').innerHTML = s;

        // legends
        const chevron = '<svg class="shrink-0" width="12" height="12" viewBox="0 0 12 12"><circle cx="6" cy="6" r="5.500" fill="#666"/><path d="M3.500 5l2.500 2.500L8.500 5" fill="none" stroke="#ddd" stroke-width="1.300"/></svg>';
        const up = '<svg class="inline ml-[1px]" width="7" height="12" viewBox="0 0 7 12"><path d="M3.500 4v8" stroke="#ff4040"/><path d="M1 5h5L3.500 0z" fill="#ff4040"/></svg>';
        const down = '<svg class="inline ml-[1px]" width="7" height="12" viewBox="0 0 7 12"><path d="M3.500 0v8" stroke="#54fcfc"/><path d="M1 7h5l-2.500 5z" fill="#54fcfc"/></svg>';
        const item = (t, color, arrow) => `<span class="flex items-center ${color}">${t}${arrow}</span>`;
        document.getElementById('price-legend').innerHTML = '<span>东华软件(月线.前复权)</span>' + chevron
            + item('MA5: 7.16', 'text-white', down) + item('MA10: 8.12', 'text-[#ffff50]', down) + item('MA20: 8.62', 'text-[#c030d0]', down) + item('MA60: 9.70', 'text-[#30d030]', up);
        document.getElementById('amo-legend').innerHTML = chevron + '<span class="ml-[3px]">AMO-TDX(5,10)</span>'
            + item('VAMO: 359607.16', 'ml-[3px] text-white', up) + item('AMOW: 359607.16', 'ml-[11px] text-[#ffff50]', up) + item('MA5: 360848.66', 'ml-[6px] text-[#ffff50]', down) + item('MA10: 588229.81', 'ml-[6px] text-[#c030d0]', down);
        document.getElementById('macd-legend').innerHTML = chevron + '<span class="ml-[4px]">MACD(12,26,9)</span>'
            + item('DIF: -0.71', 'ml-[4px] text-white', up) + item('DEA: -0.58', 'ml-[6px] text-[#ffff50]', down) + item('MACD: -0.27', 'ml-[5px] text-[#c030d0]', up);

        // order book
        const bookRow = ([n, p, q]) => `<div class="flex items-center h-[19px]"><span class="w-[36px] text-[16px]">${n}</span><b class="w-[75px] text-right text-[14px] pr-[2px] text-[#30c030]">${p}</b><b class="flex-1 pr-[1px] text-right text-[14px] text-[#c8c84c]">${q}</b></div>`;
        document.getElementById('asks').innerHTML = [['卖五', '8.15', 857], ['卖四', '8.14', 172], ['卖三', '8.13', 480], ['卖二', '8.12', 391], ['卖一', '8.11', 2558]].map(bookRow).join('');
        document.getElementById('bids').innerHTML = [['买一', '8.10', 425], ['买二', '8.09', 2485], ['买三', '8.08', 2423], ['买四', '8.07', 1457], ['买五', '8.06', 1261]].map(bookRow).join('');

        // ticks
        const ticks = [['14:56', '8.11', 1410, 'S', 29], ['', '8.11', 425, 'S', 11], ['', '8.11', 56, 'B', 3], ['', '8.11', 27, 'B', 5], ['', '8.10', 112, 'S', 11], ['', '8.12', 247, 'B', 10], ['', '8.12', 156, 'B', 8], ['', '8.11', 48, '', 10], ['', '8.10', 11, 'S', 5], ['', '8.11', 73, 'B', 12], ['', '8.11', 131, 'S', 8], ['', '8.11', 120, 'S', 3], ['', '8.12', 8, 'B', 5], ['', '8.11', 35, 'S', 2], ['', '8.11', 80, 'S', 5], ['', '8.12', 14, 'B', 2], ['', '8.11', 10, 'S', 1], ['14:57', '8.11', 376, 'S', 12], ['15:00', '8.10', 3888, '', 187]];
        document.getElementById('trades').innerHTML = ticks.map(([time, price, vol, side, cnt], i) => {
            const volClass = vol >= 300 ? 'text-[#b020c0]' : 'text-[#c8c84c]';
            const sideClass = side == 'S' ? 'text-[#30c030]' : 'text-[#e83c4c]';
            const rowClass = i >= 17 ? 'border-t border-dotted border-[#a8141c]' : '';
            return `<div class="flex items-center h-[18px] pl-[2px] text-[14px] font-bold ${rowClass}"><span class="w-[40px] text-[#b4b4b4]">${time}</span><span class="w-[65px] text-right text-[#30c030]">${price}</span><span class="w-[64px] text-right ${volClass}">${vol}</span><span class="ml-[10px] w-[12px] ${sideClass}">${side}</span><span class="flex-1 pr-[1px] text-right text-[#8c8c8c]">${cnt}</span></div>`;
        }).join('');
    </script>
</body>

</html>
